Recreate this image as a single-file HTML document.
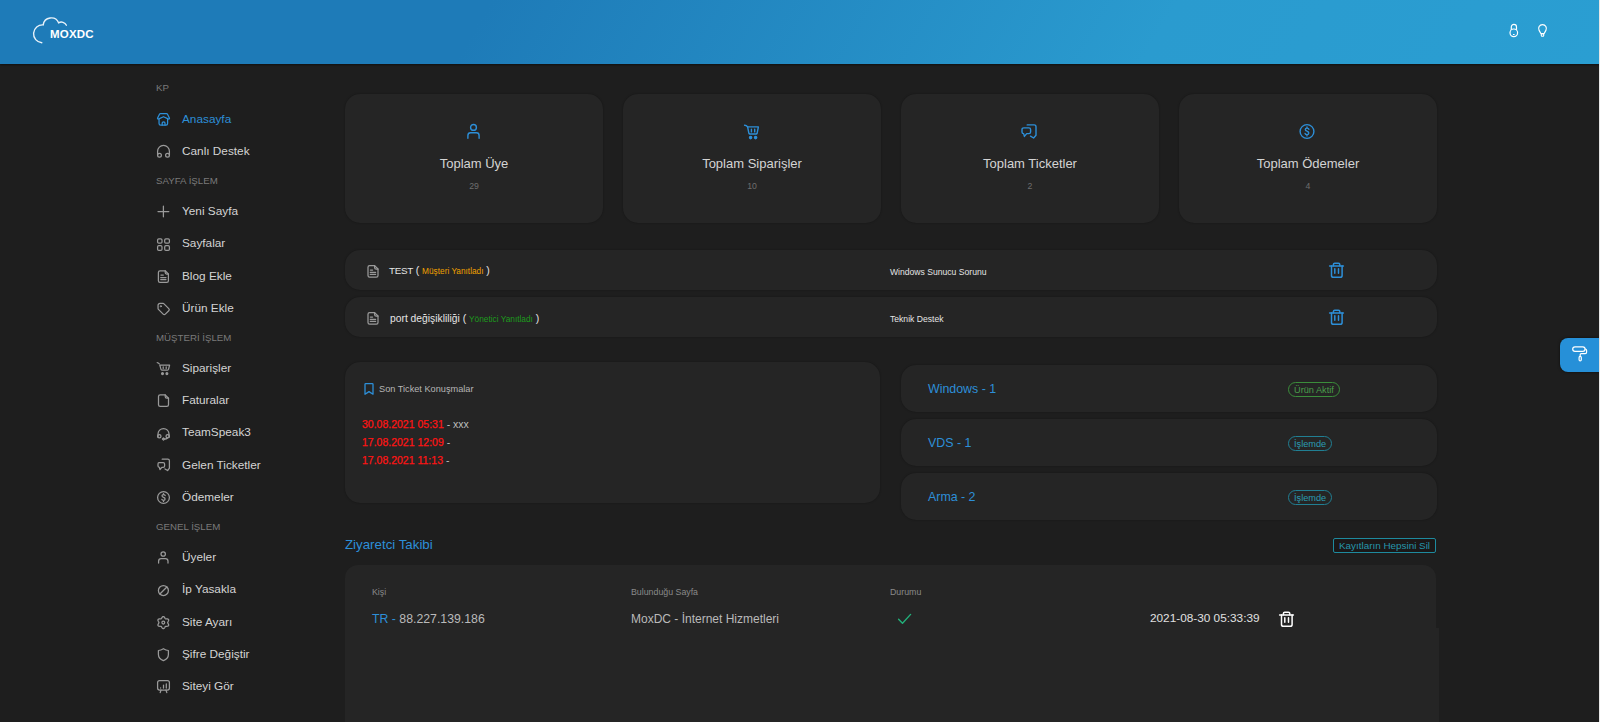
<!DOCTYPE html>
<html><head><meta charset="utf-8">
<style>
*{box-sizing:border-box;margin:0;padding:0}
html,body{width:1600px;height:722px;overflow:hidden;background:#1e1e1e;font-family:"Liberation Sans",sans-serif;}
.abs{position:absolute;white-space:nowrap}
#hdr{position:absolute;left:0;top:0;width:1600px;height:64px;background:linear-gradient(120deg,#1e7bb8 0%,#1e7bb8 30%,#2a9bcf 72%,#2a9ed2 100%);box-shadow:0 1px 2px rgba(0,0,0,.45)}
#edge{position:absolute;left:1599px;top:0;width:1px;height:722px;background:#e6e6e6}
.sec{position:absolute;left:156px;font-size:9.7px;color:#7a7a7a;line-height:12px;white-space:nowrap}
.it{position:absolute;left:182px;font-size:11.8px;color:#d4d4d4;line-height:16px;white-space:nowrap}
.ic{position:absolute;left:156px;width:15px;height:15px}
.ic svg{display:block;width:15px;height:15px}
.card{position:absolute;background:#252525;border-radius:15px;box-shadow:0 0 2px rgba(0,0,0,.35)}
.stat{top:94px;width:258px;height:129px}
.stat .t{position:absolute;left:0;width:258px;top:62px;text-align:center;font-size:13px;color:#d4d4d4;line-height:16px}
.stat .n{position:absolute;left:0;width:258px;top:87px;text-align:center;font-size:8.7px;color:#6e6e6e;line-height:10px}
.stat .si{position:absolute;left:121px;top:29px;width:16px;height:16px}
.trow{left:345px;width:1092px;height:40px}
.prow{left:901px;width:536px;height:47px}
.badge{position:absolute;left:387px;top:17px;height:15px;border-radius:8px;font-size:9.2px;line-height:14px;padding:0 5px;white-space:nowrap}
</style></head>
<body>
<div id="hdr"></div>
<!-- logo -->
<svg class="abs" style="left:30px;top:14px" width="40" height="34" viewBox="0 0 40 34">
 <path d="M11.8 28.7 A8.9 8.9 0 1 1 13.2 10.9 A8.06 8.06 0 0 1 28.6 8.8 A5.6 5.6 0 0 1 36.4 11.2" fill="none" stroke="#e8f2fa" stroke-width="1.4" stroke-linecap="round"/>
</svg>
<div class="abs" style="left:50px;top:28px;font-size:11.5px;font-weight:700;color:#fff;letter-spacing:0.2px;line-height:13px">MOXDC</div>
<!-- header icons -->
<svg class="abs" style="left:1508px;top:22px" width="12" height="16" viewBox="0 0 12 16">
 <rect x="3.3" y="2.3" width="5.2" height="8" rx="2.6" fill="none" stroke="#fff" stroke-width="1.2"/>
 <circle cx="5.8" cy="10.8" r="3.8" fill="#2a9bd2" stroke="#fff" stroke-width="1.2"/>
 <rect x="5" y="12" width="1.6" height="1" fill="#fff"/>
</svg>
<svg class="abs" style="left:1536px;top:22px" width="12" height="16" viewBox="0 0 12 16">
 <path d="M5 11.7 L3.1 8.4 A3.9 3.9 0 1 1 9.9 8.4 L8 11.7 Z" fill="none" stroke="#fff" stroke-width="1.2" stroke-linejoin="round"/>
 <rect x="5.3" y="11.8" width="2.4" height="2.5" rx="0.7" fill="none" stroke="#fff" stroke-width="1.1"/>
</svg>

<!-- sidebar -->
<div class="sec" style="top:82px">KP</div>
<div class="it" style="top:111px;color:#2d8fd8">Anasayfa</div>
<div class="it" style="top:143px">Canlı Destek</div>
<div class="sec" style="top:175px">SAYFA İŞLEM</div>
<div class="it" style="top:203px">Yeni Sayfa</div>
<div class="it" style="top:235px">Sayfalar</div>
<div class="it" style="top:268px">Blog Ekle</div>
<div class="it" style="top:300px">Ürün Ekle</div>
<div class="sec" style="top:332px">MÜŞTERİ İŞLEM</div>
<div class="it" style="top:360px">Siparişler</div>
<div class="it" style="top:392px">Faturalar</div>
<div class="it" style="top:424px">TeamSpeak3</div>
<div class="it" style="top:457px">Gelen Ticketler</div>
<div class="it" style="top:489px">Ödemeler</div>
<div class="sec" style="top:521px">GENEL İŞLEM</div>
<div class="it" style="top:549px">Üyeler</div>
<div class="it" style="top:581px">İp Yasakla</div>
<div class="it" style="top:614px">Site Ayarı</div>
<div class="it" style="top:646px">Şifre Değiştir</div>
<div class="it" style="top:678px">Siteyi Gör</div>

<!-- stat cards -->
<div class="card stat" style="left:345px"><div class="t">Toplam Üye</div><div class="n">29</div></div>
<div class="card stat" style="left:623px"><div class="t">Toplam Siparişler</div><div class="n">10</div></div>
<div class="card stat" style="left:901px"><div class="t">Toplam Ticketler</div><div class="n">2</div></div>
<div class="card stat" style="left:1179px"><div class="t">Toplam Ödemeler</div><div class="n">4</div></div>

<!-- ticket rows -->
<div class="card trow" style="top:250px"></div>
<div class="card trow" style="top:297px"></div>
<div class="abs" style="left:389px;top:264px;font-size:9.9px;color:#e4e4e4;line-height:12px"><span style="letter-spacing:-0.3px">TEST</span> <span style="font-size:10.5px">(</span> <span style="font-size:8.3px;color:#f0a000">Müşteri Yanıtladı</span> <span style="font-size:10.5px">)</span></div>
<div class="abs" style="left:390px;top:312px;font-size:10.3px;color:#e4e4e4;line-height:12px">port değişikliliği <span style="font-size:10.5px">(</span> <span style="font-size:8.3px;color:#1d9a1d">Yönetici Yanıtladı</span> <span style="font-size:10.5px">)</span></div>
<div class="abs" style="left:890px;top:267px;font-size:8.6px;color:#e4e4e4;line-height:11px">Windows Sunucu Sorunu</div>
<div class="abs" style="left:890px;top:314px;font-size:8.6px;color:#e4e4e4;line-height:11px">Teknik Destek</div>

<!-- son ticket -->
<div class="card" style="left:345px;top:362px;width:535px;height:141px"></div>
<div class="abs" style="left:379px;top:384px;font-size:9.2px;color:#b6b6b6;line-height:11px">Son Ticket Konuşmalar</div>
<div class="abs" style="left:362px;top:418px;font-size:10.5px;color:#ff1414;line-height:13px;-webkit-text-stroke:0.25px #ff1414">30.08.2021 05:31 <span style="color:#bdbdbd;-webkit-text-stroke:0">- xxx</span></div>
<div class="abs" style="left:362px;top:436px;font-size:10.5px;color:#ff1414;line-height:13px;-webkit-text-stroke:0.25px #ff1414">17.08.2021 12:09 <span style="color:#bdbdbd;-webkit-text-stroke:0">-</span></div>
<div class="abs" style="left:362px;top:454px;font-size:10.5px;color:#ff1414;line-height:13px;-webkit-text-stroke:0.25px #ff1414">17.08.2021 11:13 <span style="color:#bdbdbd;-webkit-text-stroke:0">-</span></div>

<!-- products -->
<div class="card prow" style="top:365px"><div class="abs" style="left:27px;top:17px;font-size:12.4px;color:#2d8fd8;line-height:15px">Windows - 1</div><div class="badge" style="border:1px solid #3b8d3b;color:#4a9e4a">Ürün Aktif</div></div>
<div class="card prow" style="top:419px"><div class="abs" style="left:27px;top:17px;font-size:12.4px;color:#2d8fd8;line-height:15px">VDS - 1</div><div class="badge" style="border:1px solid #217f93;color:#2b9cb3">İşlemde</div></div>
<div class="card prow" style="top:473px"><div class="abs" style="left:27px;top:17px;font-size:12.4px;color:#2d8fd8;line-height:15px">Arma - 2</div><div class="badge" style="border:1px solid #217f93;color:#2b9cb3">İşlemde</div></div>

<!-- visitors -->
<div class="abs" style="left:345px;top:537px;font-size:13.3px;color:#2d8fd8;line-height:16px">Ziyaretci Takibi</div>
<div class="abs" style="left:1333px;top:538px;width:103px;height:15px;border:1px solid #1e8a9e;border-radius:2px;background:#1b1818;font-size:9.9px;color:#2596ac;line-height:13px;text-align:center">Kayıtların Hepsini Sil</div>
<div class="card" style="left:345px;top:565px;width:1091px;height:200px;border-radius:13px 13px 0 0;box-shadow:none"></div>
<div class="abs" style="left:345px;top:628px;width:1094px;height:100px;background:#252525"></div>
<div class="abs" style="left:372px;top:587px;font-size:8.8px;color:#8a8a8a;line-height:11px">Kişi</div>
<div class="abs" style="left:631px;top:587px;font-size:8.8px;color:#8a8a8a;line-height:11px">Bulunduğu Sayfa</div>
<div class="abs" style="left:890px;top:587px;font-size:8.8px;color:#8a8a8a;line-height:11px">Durumu</div>
<div class="abs" style="left:372px;top:612px;font-size:12.3px;color:#bababa;line-height:15px"><span style="color:#2d8fd8">TR -</span> 88.227.139.186</div>
<div class="abs" style="left:631px;top:612px;font-size:12px;color:#bababa;line-height:15px">MoxDC - İnternet Hizmetleri</div>
<div class="abs" style="left:1150px;top:611px;font-size:11.8px;color:#e0e0e0;line-height:15px">2021-08-30 05:33:39</div>

<!-- float button -->
<div class="abs" style="left:1560px;top:338px;width:40px;height:34px;background:#2690d8;border-radius:8px 0 0 8px;box-shadow:0 0 3px rgba(0,0,0,.6)"></div>
<!-- icons -->
<svg class="abs" style="left:152px;top:107px" width="24" height="24" viewBox="0 0 24 24" fill="none" stroke="#2d8fd8" stroke-width="1.25" stroke-linecap="round" stroke-linejoin="round"><path d="M5.5 11.3 L7.5 7.2 Q7.8 6.6 8.5 6.6 H14.5 Q15.2 6.6 15.5 7.2 L17.5 11.3 Q17.5 12 16.8 12 Q16.2 12 15.6 11.6 L11.5 9.7 L7.4 11.6 Q6.8 12 6.2 12 Q5.5 12 5.5 11.3 Z"/><path d="M7.05 12 V16.4 Q7.05 18.1 8.7 18.1 H14 Q15.6 18.1 15.6 16.4 V12"/><path d="M10.2 18.1 V15.9 Q10.2 14.8 11.6 14.8 Q13 14.8 13 15.9 V18.1"/></svg>
<svg class="abs" style="left:152px;top:139px" width="24" height="24" viewBox="0 0 24 24" fill="none" stroke="#9a9a9a" stroke-width="1.25" stroke-linecap="round" stroke-linejoin="round"><path d="M5.6 16 V12.3 A5.9 5.9 0 0 1 17.4 12.3 V16"/><circle cx="7.5" cy="16.3" r="1.9"/><circle cx="15.5" cy="16.3" r="1.9"/></svg>
<svg class="abs" style="left:152px;top:200px" width="24" height="24" viewBox="0 0 24 24" fill="none" stroke="#9a9a9a" stroke-width="1.25" stroke-linecap="round" stroke-linejoin="round"><path d="M11.4 6.2 V16.8 M6 11.5 H16.8"/></svg>
<svg class="abs" style="left:152px;top:233px" width="24" height="24" viewBox="0 0 24 24" fill="none" stroke="#9a9a9a" stroke-width="1.25" stroke-linecap="round" stroke-linejoin="round"><rect x="5.6" y="5.8" width="4.4" height="4.4" rx="1.2"/><rect x="12.7" y="5.8" width="4.7" height="4.4" rx="1.2"/><rect x="5.6" y="12.7" width="4.4" height="4.7" rx="1.2"/><rect x="12.7" y="12.7" width="4.7" height="4.7" rx="1.2"/></svg>
<svg class="abs" style="left:152px;top:265px" width="24" height="24" viewBox="0 0 24 24" fill="none" stroke="#9a9a9a" stroke-width="1.25" stroke-linecap="round" stroke-linejoin="round"><path d="M13.2 5.8 H8 Q6.4 5.8 6.4 7.4 V15.8 Q6.4 17.4 8 17.4 H14.8 Q16.4 17.4 16.4 15.8 V9 Z"/><path d="M13.2 5.8 V7.6 Q13.2 9 14.6 9 H16.4"/><path d="M8.9 10.1 H11.3 M8.7 12.6 H14 M8.7 14.6 H14"/></svg>
<svg class="abs" style="left:152px;top:297px" width="24" height="24" viewBox="0 0 24 24" fill="none" stroke="#9a9a9a" stroke-width="1.25" stroke-linecap="round" stroke-linejoin="round"><g transform="translate(4.2 4.6) scale(0.62)"><path d="M3 6v5.172a2 2 0 0 0 .586 1.414l7.71 7.71a2.41 2.41 0 0 0 3.408 0l5.592-5.592a2.41 2.41 0 0 0 0-3.408l-7.71-7.71a2 2 0 0 0-1.414-.586h-5.172a3 3 0 0 0-3 3z" stroke-width="2"/><circle cx="7.5" cy="7.5" r="1" fill="#9a9a9a" stroke-width="1.5"/></g></svg>
<svg class="abs" style="left:152px;top:357px" width="24" height="24" viewBox="0 0 24 24" fill="none" stroke="#9a9a9a" stroke-width="1.25" stroke-linecap="round" stroke-linejoin="round"><path d="M5.2 5.6 Q6.3 5.6 7.3 6.9"/><path d="M7.8 8.2 H17.6 L16.5 12.4 Q16.3 13 15.6 13 H9.8 Q9.1 13 9 12.4 Z"/><path d="M11.2 9.8 V11.6 M14.2 9.8 V11.6"/><circle cx="10.5" cy="16.6" r="0.9" fill="#9a9a9a"/><circle cx="14.9" cy="16.6" r="0.9" fill="#9a9a9a"/></svg>
<svg class="abs" style="left:152px;top:389px" width="24" height="24" viewBox="0 0 24 24" fill="none" stroke="#9a9a9a" stroke-width="1.25" stroke-linecap="round" stroke-linejoin="round"><path d="M13.2 5.9 H8.2 Q6.5 5.9 6.5 7.6 V15.7 Q6.5 17.4 8.2 17.4 H14.8 Q16.5 17.4 16.5 15.7 V9.2 Z"/><path d="M13.2 5.9 V7.6 Q13.2 9.2 14.8 9.2 H16.5"/></svg>
<svg class="abs" style="left:152px;top:422px" width="24" height="24" viewBox="0 0 24 24" fill="none" stroke="#9a9a9a" stroke-width="1.25" stroke-linecap="round" stroke-linejoin="round"><path d="M6 15 V12 A5.5 5.5 0 0 1 17 12 V15"/><circle cx="7.3" cy="14.2" r="1.7"/><circle cx="15.7" cy="14.2" r="1.7"/><path d="M15.5 16 Q14.5 17 12.8 17"/><path d="M11.5 15.9 L12.6 17 L11.5 18.1 L10.4 17 Z"/></svg>
<svg class="abs" style="left:152px;top:453px" width="24" height="24" viewBox="0 0 24 24" fill="none" stroke="#9a9a9a" stroke-width="1.25" stroke-linecap="round" stroke-linejoin="round"><path d="M10.2 6.2 H15.8 Q17.4 6.2 17.4 7.8 V15.2 L15.6 17.6 L13 15.9"/><path d="M7 9.6 H11.2 Q12.6 9.6 12.6 11 V13 Q12.6 14.4 11.2 14.4 H9.8 L8 16.5 L7.4 14.4 Q6 14.2 6 13 V11 Q6 9.6 7 9.6 Z"/></svg>
<svg class="abs" style="left:152px;top:486px" width="24" height="24" viewBox="0 0 24 24" fill="none" stroke="#9a9a9a" stroke-width="1.25" stroke-linecap="round" stroke-linejoin="round"><circle cx="11.5" cy="11.5" r="5.9"/><path d="M13.2 9.6 Q12.8 8.6 11.5 8.6 Q10 8.6 10 9.8 Q10 10.9 11.5 11.3 Q13.1 11.7 13.1 12.9 Q13.1 14.3 11.5 14.3 Q10.2 14.3 9.8 13.3 M11.5 7.6 V8.6 M11.5 14.3 V15.4"/></svg>
<svg class="abs" style="left:152px;top:546px" width="24" height="24" viewBox="0 0 24 24" fill="none" stroke="#9a9a9a" stroke-width="1.25" stroke-linecap="round" stroke-linejoin="round"><circle cx="11.2" cy="8" r="2.2"/><path d="M6.6 17 V15.2 Q6.6 12.6 9.2 12.6 H13.4 Q16 12.6 16 15.2 V17"/></svg>
<svg class="abs" style="left:152px;top:578px" width="24" height="24" viewBox="0 0 24 24" fill="none" stroke="#9a9a9a" stroke-width="1.25" stroke-linecap="round" stroke-linejoin="round"><circle cx="11.4" cy="12.5" r="5"/><path d="M14.9 9 L7.9 16"/></svg>
<svg class="abs" style="left:152px;top:610px" width="24" height="24" viewBox="0 0 24 24" fill="none" stroke="#9a9a9a" stroke-width="1.25" stroke-linecap="round" stroke-linejoin="round"><path d="M15.65 12.60 L15.71 12.89 L15.86 13.20 L16.08 13.55 L16.32 13.95 L16.53 14.38 L16.66 14.82 L16.67 15.25 L16.54 15.62 L16.28 15.93 L15.90 16.13 L15.45 16.24 L14.98 16.28 L14.51 16.27 L14.10 16.25 L13.75 16.27 L13.48 16.37 L13.25 16.56 L13.06 16.85 L12.87 17.22 L12.65 17.62 L12.38 18.02 L12.06 18.35 L11.69 18.57 L11.30 18.65 L10.91 18.57 L10.54 18.35 L10.22 18.02 L9.95 17.62 L9.73 17.22 L9.54 16.85 L9.35 16.56 L9.13 16.37 L8.85 16.27 L8.50 16.25 L8.09 16.27 L7.62 16.28 L7.15 16.24 L6.70 16.13 L6.32 15.93 L6.06 15.62 L5.93 15.25 L5.94 14.82 L6.07 14.38 L6.28 13.95 L6.52 13.55 L6.74 13.20 L6.89 12.89 L6.95 12.60 L6.89 12.31 L6.74 12.00 L6.52 11.65 L6.28 11.25 L6.07 10.82 L5.94 10.38 L5.93 9.95 L6.06 9.58 L6.32 9.27 L6.70 9.07 L7.15 8.96 L7.62 8.92 L8.09 8.93 L8.50 8.95 L8.85 8.93 L9.12 8.83 L9.35 8.64 L9.54 8.35 L9.73 7.98 L9.95 7.58 L10.22 7.18 L10.54 6.85 L10.91 6.63 L11.30 6.55 L11.69 6.63 L12.06 6.85 L12.38 7.18 L12.65 7.58 L12.87 7.98 L13.06 8.35 L13.25 8.64 L13.48 8.83 L13.75 8.93 L14.10 8.95 L14.51 8.93 L14.98 8.92 L15.45 8.96 L15.90 9.07 L16.28 9.27 L16.54 9.57 L16.67 9.95 L16.66 10.38 L16.53 10.82 L16.32 11.25 L16.08 11.65 L15.86 12.00 L15.71 12.31 Z"/><circle cx="11.3" cy="12.6" r="1.4"/></svg>
<svg class="abs" style="left:152px;top:642px" width="24" height="24" viewBox="0 0 24 24" fill="none" stroke="#9a9a9a" stroke-width="1.25" stroke-linecap="round" stroke-linejoin="round"><path d="M11.4 6.7 Q14 8.3 16.4 8.5 V12.4 Q16.4 16.5 11.4 18.6 Q6.4 16.5 6.4 12.4 V8.5 Q8.8 8.3 11.4 6.7 Z"/></svg>
<svg class="abs" style="left:152px;top:674px" width="24" height="24" viewBox="0 0 24 24" fill="none" stroke="#9a9a9a" stroke-width="1.25" stroke-linecap="round" stroke-linejoin="round"><rect x="5.6" y="6.6" width="11.8" height="9.4" rx="2"/><path d="M8.6 13.8 V14 M11.5 11 V14 M14.3 9.8 V14 M9 16 L8.2 18.6 M14 16 L14.8 18.6"/></svg>
<svg class="abs" style="left:460px;top:118px" width="28" height="28" viewBox="0 0 28 28" fill="none" stroke="#2d8fd8" stroke-width="1.4" stroke-linecap="round" stroke-linejoin="round"><circle cx="13.5" cy="9.4" r="2.9"/><path d="M7.9 20.3 V17.5 Q7.9 14.8 10.6 14.8 H16.4 Q19.1 14.8 19.1 17.5 V20.3"/></svg>
<svg class="abs" style="left:738px;top:118px" width="28" height="28" viewBox="0 0 28 28" fill="none" stroke="#2d8fd8" stroke-width="1.4" stroke-linecap="round" stroke-linejoin="round"><path d="M6.6 7.2 Q8.2 7.1 9.5 8.8"/><path d="M9.6 8.9 H20.4 L19.1 15.3 Q18.9 16 18.1 16 H11.9 Q11.1 16 10.9 15.3 Z"/><path d="M13.4 11.3 V13.9 M16.7 11.3 V13.9"/><circle cx="12.6" cy="19.6" r="1.1" fill="#2d8fd8"/><circle cx="17.6" cy="19.6" r="1.1" fill="#2d8fd8"/></svg>
<svg class="abs" style="left:1015px;top:118px" width="28" height="28" viewBox="0 0 28 28" fill="none" stroke="#2d8fd8" stroke-width="1.4" stroke-linecap="round" stroke-linejoin="round"><path d="M12.2 6.9 H19.1 Q21 6.9 21 8.8 V17.3 L18.6 20 L15.5 18.2"/><path d="M8.9 9.9 H13.9 Q15.6 9.9 15.6 11.6 V14 Q15.6 15.6 13.9 15.6 H11.7 L9.4 18.4 L8.6 15.6 Q7 15.5 7 14 V11.6 Q7 9.9 8.9 9.9 Z"/></svg>
<svg class="abs" style="left:1293px;top:118px" width="28" height="28" viewBox="0 0 28 28" fill="none" stroke="#2d8fd8" stroke-width="1.4" stroke-linecap="round" stroke-linejoin="round"><circle cx="14" cy="13.5" r="6.9"/><path d="M15.9 11.3 Q15.5 10.1 14 10.1 Q12.3 10.1 12.3 11.5 Q12.3 12.7 14 13.2 Q15.8 13.6 15.8 15 Q15.8 16.6 14 16.6 Q12.5 16.6 12.1 15.5 M14 9 V10.1 M14 16.6 V17.9"/></svg>
<svg class="abs" style="left:361.7px;top:259.6px" width="24" height="24" viewBox="0 0 24 24" fill="none" stroke="#9a9a9a" stroke-width="1.25" stroke-linecap="round" stroke-linejoin="round"><path d="M12.6 5.6 H7.6 Q6 5.6 6 7.2 V15.6 Q6 17.2 7.6 17.2 H14.4 Q16 17.2 16 15.6 V9 Z"/><path d="M12.6 5.6 V7.4 Q12.6 9 14.2 9 H16"/><path d="M8.4 10 H10.6 M8.3 12.4 H13.6 M8.3 14.4 H13.6"/></svg>
<svg class="abs" style="left:361.7px;top:306.6px" width="24" height="24" viewBox="0 0 24 24" fill="none" stroke="#9a9a9a" stroke-width="1.25" stroke-linecap="round" stroke-linejoin="round"><path d="M12.6 5.6 H7.6 Q6 5.6 6 7.2 V15.6 Q6 17.2 7.6 17.2 H14.4 Q16 17.2 16 15.6 V9 Z"/><path d="M12.6 5.6 V7.4 Q12.6 9 14.2 9 H16"/><path d="M8.4 10 H10.6 M8.3 12.4 H13.6 M8.3 14.4 H13.6"/></svg>
<svg class="abs" style="left:1320px;top:255px" width="32" height="30" viewBox="0 0 32 30" fill="none" stroke="#2d8fd8" stroke-width="1.5" stroke-linecap="round" stroke-linejoin="round"><path d="M9.6 10.9 H23.4"/><path d="M13.4 10.7 V9.6 Q13.4 8.2 14.8 8.2 H18.4 Q19.8 8.2 19.8 9.6 V10.7"/><path d="M11.5 11 V20.4 Q11.5 22.3 13.4 22.3 H20.2 Q22.1 22.3 22.1 20.4 V11"/><path d="M14.8 13.8 V18.3 M18.5 13.8 V18.3"/></svg>
<svg class="abs" style="left:1320px;top:302px" width="32" height="30" viewBox="0 0 32 30" fill="none" stroke="#2d8fd8" stroke-width="1.5" stroke-linecap="round" stroke-linejoin="round"><path d="M9.6 10.9 H23.4"/><path d="M13.4 10.7 V9.6 Q13.4 8.2 14.8 8.2 H18.4 Q19.8 8.2 19.8 9.6 V10.7"/><path d="M11.5 11 V20.4 Q11.5 22.3 13.4 22.3 H20.2 Q22.1 22.3 22.1 20.4 V11"/><path d="M14.8 13.8 V18.3 M18.5 13.8 V18.3"/></svg>
<svg class="abs" style="left:1270px;top:604px" width="32" height="30" viewBox="0 0 32 30" fill="none" stroke="#ffffff" stroke-width="1.5" stroke-linecap="round" stroke-linejoin="round"><path d="M9.6 10.9 H23.4"/><path d="M13.4 10.7 V9.6 Q13.4 8.2 14.8 8.2 H18.4 Q19.8 8.2 19.8 9.6 V10.7"/><path d="M11.5 11 V20.4 Q11.5 22.3 13.4 22.3 H20.2 Q22.1 22.3 22.1 20.4 V11"/><path d="M14.8 13.8 V18.3 M18.5 13.8 V18.3"/></svg>
<svg class="abs" style="left:358px;top:378px" width="22" height="22" viewBox="0 0 22 22" fill="none" stroke="#2d8fd8" stroke-width="1.3" stroke-linecap="round" stroke-linejoin="round"><path d="M7 6.2 Q7 5.6 7.8 5.6 H14.2 Q15 5.6 15 6.2 V16.2 L11 13.6 L7 16.2 Z"/></svg>
<svg class="abs" style="left:890px;top:606px" width="28" height="24" viewBox="0 0 28 24" fill="none" stroke="#22b07a" stroke-width="1.4" stroke-linecap="round" stroke-linejoin="round"><path d="M8.6 13.2 L12.5 17.3 L20.6 8.4"/></svg>
<svg class="abs" style="left:1566px;top:340px" width="28" height="28" viewBox="0 0 28 28" fill="none" stroke="#ffffff" stroke-width="1.2" stroke-linecap="round" stroke-linejoin="round"><rect x="6.7" y="6.8" width="12.4" height="4.6" rx="2.3"/><path d="M19.2 9 Q20.6 9.1 20.6 10.6 V12.2 Q20.6 13.6 19.2 13.6 H15.2 Q14.2 13.6 14.2 14.6 V16.2"/><rect x="13.1" y="16.4" width="2.2" height="4.4" rx="1.1"/></svg>

<div id="edge"></div>
</body></html>
